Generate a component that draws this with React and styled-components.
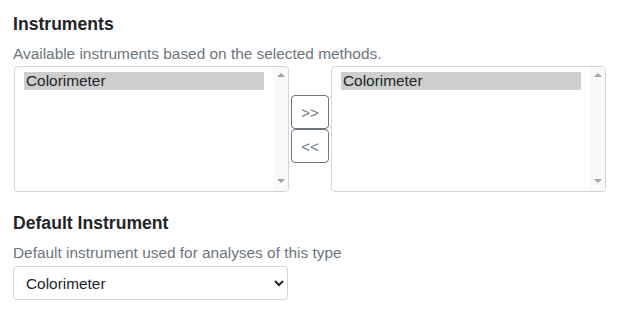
import React from 'react'
import styled, { createGlobalStyle } from 'styled-components'

const GlobalStyle = createGlobalStyle`
  body {
    margin: 0;
    background: #fff;
    font-family: "Liberation Sans", Arial, sans-serif;
    color: #212529;
  }
`

const Page = styled.div`
  padding: 12px 13px 0;
`

const Section = styled.section`
  margin-bottom: 19px;
  &:last-child {
    margin-bottom: 0;
  }
`

const Title = styled.h3`
  margin: 0 0 7px 0;
  font-size: 17.6px;
  font-weight: 700;
  line-height: 24px;
  color: #212529;
`

const Help = styled.div`
  font-size: 15.4px;
  line-height: 22px;
  color: #6c757d;
  margin-bottom: ${p => p.$gap ?? 1}px;
`

const Picker = styled.div`
  display: flex;
  align-items: center;
  gap: 2px;
  padding-left: 1px;
`

const ListBox = styled.div`
  display: flex;
  width: 275px;
  height: 126px;
  box-sizing: border-box;
  border: 1px solid #ced4da;
  border-radius: 4px;
  background: #fff;
  overflow: hidden;
`

const Options = styled.div`
  flex: 1;
  padding: 5px 9px;
`

const Option = styled.div`
  padding: 0 2px;
  line-height: 18px;
  font-size: 15.4px;
  color: #212529;
  background: ${p => (p.$selected ? '#cecece' : 'transparent')};
`

const ScrollTrack = styled.div`
  width: 15px;
  display: flex;
  flex-direction: column;
  justify-content: space-between;
  align-items: center;
  padding: 6px 0 8px;
  background: #f9f9f9;
`

const Arrow = styled.span`
  width: 0;
  height: 0;
  border-left: 4px solid transparent;
  border-right: 4px solid transparent;
  ${p =>
    p.$down
      ? 'border-top: 4px solid #a3a3a3;'
      : 'border-bottom: 4px solid #a3a3a3;'}
`

const Arrows = styled.div`
  display: flex;
  flex-direction: column;
`

const MoveButton = styled.button`
  width: 38px;
  height: 34px;
  box-sizing: border-box;
  border: 1px solid #6c757d;
  border-radius: 4px;
  background: #fff;
  color: #6c757d;
  font-family: "Liberation Sans", Arial, sans-serif;
  font-size: 15px;
  padding: 0;
`

const Dropdown = styled.select`
  width: 275px;
  height: 34px;
  box-sizing: border-box;
  border: 1px solid #ced4da;
  border-radius: 4px;
  padding: 0 8px;
  font-family: "Liberation Sans", Arial, sans-serif;
  font-size: 15.4px;
  color: #212529;
  background: #fff;
`

const InstrumentList = () => (
  <ListBox>
    <Options>
      <Option $selected>Colorimeter</Option>
    </Options>
    <ScrollTrack>
      <Arrow />
      <Arrow $down />
    </ScrollTrack>
  </ListBox>
)

export default function App() {
  return (
    <Page>
      <GlobalStyle />
      <Section>
        <Title>Instruments</Title>
        <Help>Available instruments based on the selected methods.</Help>
        <Picker>
          <InstrumentList />
          <Arrows>
            <MoveButton type='button'>&gt;&gt;</MoveButton>
            <MoveButton type='button'>&lt;&lt;</MoveButton>
          </Arrows>
          <InstrumentList />
        </Picker>
      </Section>
      <Section>
        <Title>Default Instrument</Title>
        <Help $gap={2}>Default instrument used for analyses of this type</Help>
        <Dropdown defaultValue='colorimeter'>
          <option value='colorimeter'>Colorimeter</option>
        </Dropdown>
      </Section>
    </Page>
  )
}
